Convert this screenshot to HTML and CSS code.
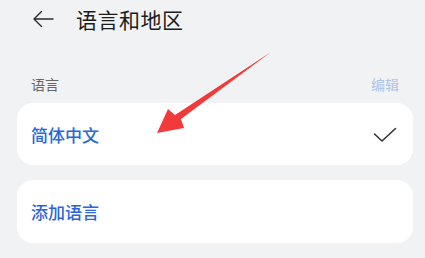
FILE: index.html
```html
<!DOCTYPE html>
<html lang="zh-CN">
<head>
    <meta charset="UTF-8">
    <meta name="viewport" content="width=device-width, initial-scale=1.0">
    <title>语言和地区</title>
    <link rel="stylesheet" href="styles.css">
</head>
<body>

<div class="page">
    <div class="title-bar">
        <svg class="back" width="22" height="18" viewBox="0 0 22 18">
            <path d="M21 9 H2 M9.5 1.5 L2 9 L9.5 16.5" fill="none" stroke="#2a2a2a" stroke-width="1.4" stroke-linecap="round" stroke-linejoin="round"/>
        </svg>
        <span class="title">语言和地区</span>
    </div>

    <div class="section-head">
        <span class="section-label">语言</span>
        <span class="edit">编辑</span>
    </div>

    <div class="card">
        <span class="item">简体中文</span>
        <svg class="check" width="24" height="16" viewBox="0 0 24 16">
            <path d="M1.5 7 L9 14 L22.5 1.5" fill="none" stroke="#333" stroke-width="1.6" stroke-linecap="round" stroke-linejoin="round"/>
        </svg>
    </div>

    <div class="card second">
        <span class="item">添加语言</span>
    </div>

    <!-- annotation arrow -->
    <svg class="pointer" width="425" height="258" viewBox="0 0 425 258">
        <path d="M271 52 L181 119 L184 128 L157 133 L168 109 L175 115 Z" fill="#f23a3a"/>
    </svg>
</div>

</body>
</html>
```

FILE: styles.css
```css
body {
    margin: 0;
    background-color: #f1f2f4;
    font-family: 'Noto Sans CJK SC', 'Noto Sans', sans-serif;
}
.page {
    position: relative;
    width: 425px;
    height: 258px;
    overflow: hidden;
}
.title-bar {
    display: flex;
    align-items: center;
    height: 38px;
    padding-left: 32px;
}
.back {
    margin-right: 22px;
}
.title {
    font-size: 21px;
    color: #1c1c1c;
    letter-spacing: 0.5px;
}
.section-head {
    display: flex;
    justify-content: space-between;
    align-items: center;
    padding: 35px 26px 0 31px;
    height: 22px;
    margin-bottom: 8px;
}
.section-label {
    font-size: 14px;
    color: #666;
}
.edit {
    font-size: 14px;
    color: #abc4ef;
}
.card {
    display: flex;
    justify-content: space-between;
    align-items: center;
    margin: 0 12px 0 17px;
    height: 62px;
    padding: 0 16px 0 14px;
    background-color: #fff;
    border-radius: 16px;
}
.card.second {
    margin-top: 15px;
    height: 63px;
}
.item {
    font-size: 17px;
    font-weight: 500;
    color: #2a66d8;
}
.check {
    margin-top: 2px;
}
.pointer {
    position: absolute;
    left: 0;
    top: 0;
}
```
